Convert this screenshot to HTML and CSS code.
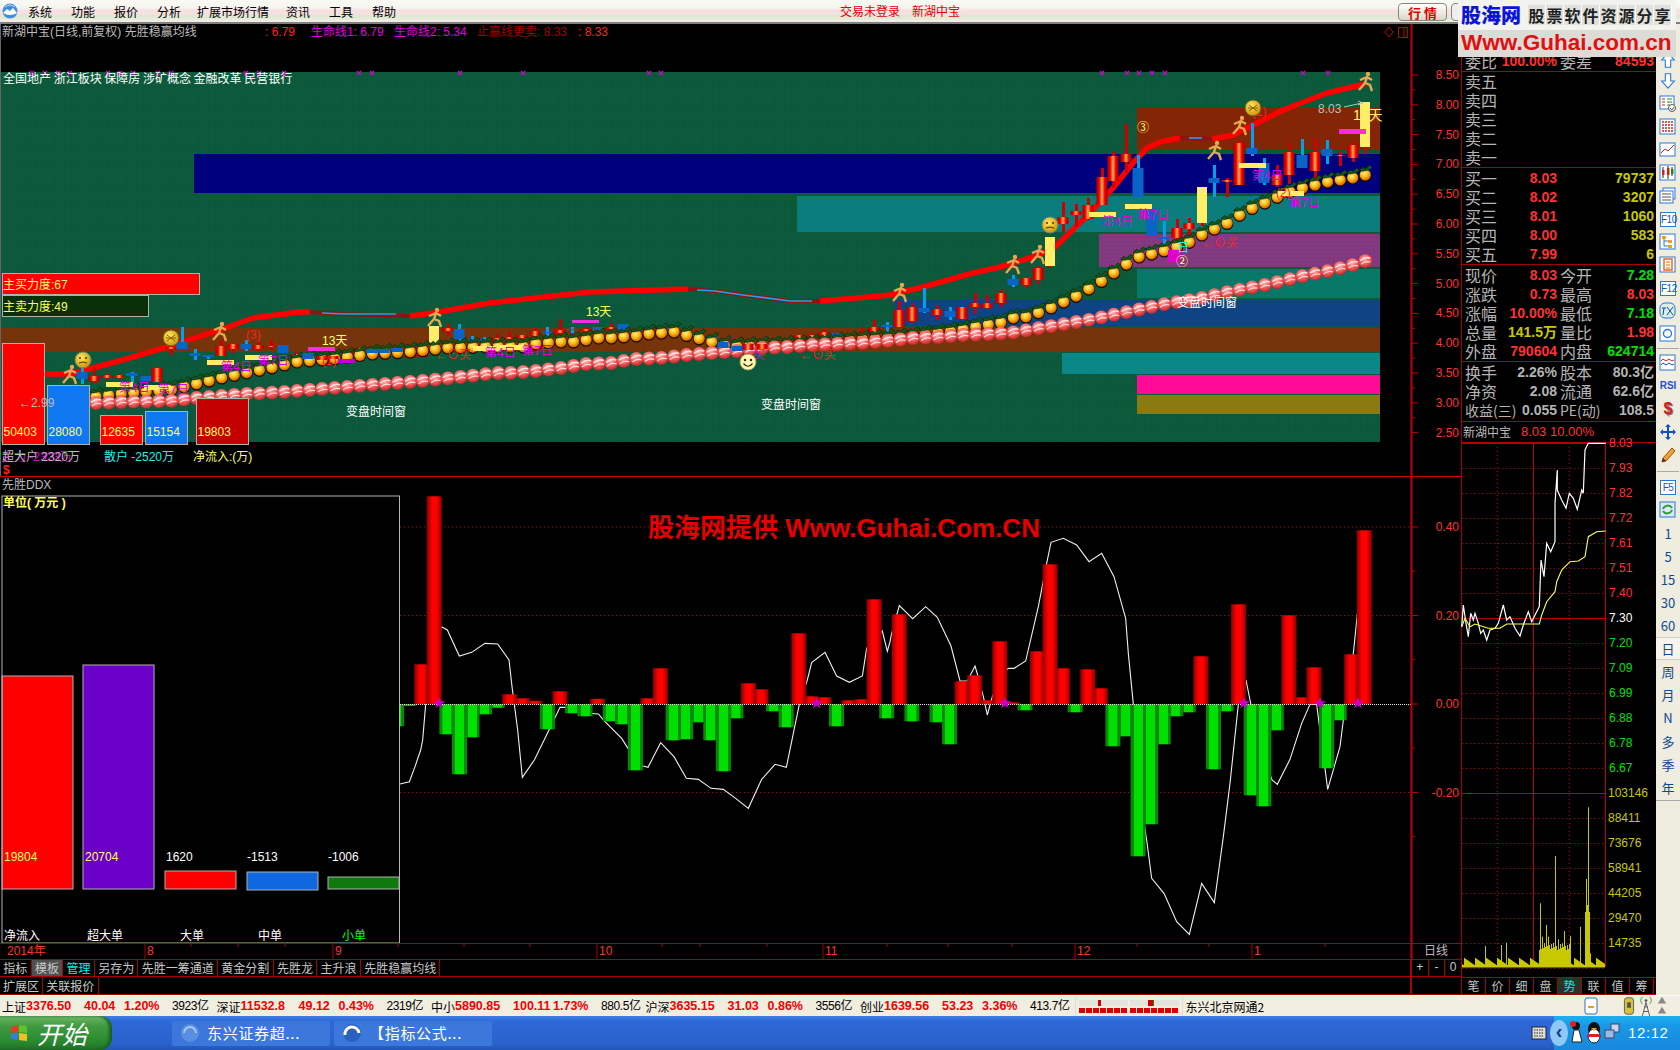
FILE: index.html
```html
<!DOCTYPE html>
<html lang="zh-CN">
<head>
<meta charset="utf-8">
<title>新湖中宝 行情</title>
<link rel="stylesheet" href="styles.css">
</head>
<body>
<div class="app">
  <header class="menubar">
    <svg class="logo" viewBox="0 0 16 16"><circle cx="8" cy="8" r="7.5" fill="#3f8fe0"/><path d="M1 10 L5 6 L8 8 L11 5 L15 10 Q8 14 1 10Z" fill="#fff"/><path d="M3 4 Q8 0 13 4" stroke="#cde" fill="none"/></svg>
    <nav class="menu"><span>系统</span><span>功能</span><span>报价</span><span>分析</span><span class="menu-wide">扩展市场行情</span><span>资讯</span><span>工具</span><span>帮助</span></nav>
    <div class="login"><span>交易未登录</span><span>新湖中宝</span></div>
    <button class="quote-btn">行&nbsp;情</button>
    <span class="quote-btn2"></span>
  </header>

  <div class="watermark">
    <div class="wm-top"><strong class="wm-name">股海网</strong><span class="wm-slogan"><i>股</i><i>票</i><i>软</i><i>件</i><i>资</i><i>源</i><i>分</i><i>享</i></span></div>
    <div class="wm-url">Www.Guhai.com.cn</div>
  </div>

  <div class="workspace">
    <main class="left">
      <svg id="chart" class="chart" viewBox="0 24 1461 935" width="1461" height="935">
        <defs>
          <pattern id="noise" width="9" height="5" patternUnits="userSpaceOnUse"><rect width="9" height="5" fill="#0c5a3b"/><rect x="1" y="1" width="1" height="1" fill="#0a5034"/><rect x="5" y="3" width="1" height="1" fill="#0e6040"/><rect x="7" y="0" width="1" height="1" fill="#0a5236"/></pattern>
          <pattern id="purpleDots" width="4" height="4" patternUnits="userSpaceOnUse"><rect width="4" height="4" fill="#843a80"/><rect x="1" y="1" width="1" height="1" fill="#723070"/></pattern>
          <linearGradient id="cRed"><stop offset="0" stop-color="#a80000"/><stop offset=".25" stop-color="#f00000"/><stop offset=".5" stop-color="#ffb050"/><stop offset=".75" stop-color="#f00000"/><stop offset="1" stop-color="#a80000"/></linearGradient>
          <linearGradient id="bRed"><stop offset="0" stop-color="#8c0000"/><stop offset=".35" stop-color="#ff0000"/><stop offset=".65" stop-color="#ff0000"/><stop offset="1" stop-color="#8c0000"/></linearGradient>
          <linearGradient id="bGreen"><stop offset="0" stop-color="#068a06"/><stop offset=".2" stop-color="#068a06"/><stop offset=".21" stop-color="#00e000"/><stop offset=".8" stop-color="#00e000"/><stop offset=".81" stop-color="#068a06"/><stop offset="1" stop-color="#068a06"/></linearGradient>
          <radialGradient id="orangeG" cx=".42" cy=".35" r=".7"><stop offset="0" stop-color="#fff08a"/><stop offset=".45" stop-color="#ffc018"/><stop offset="1" stop-color="#c85000"/></radialGradient>
          <radialGradient id="pearlG" cx=".45" cy=".35" r=".75"><stop offset="0" stop-color="#ffb4b4"/><stop offset=".6" stop-color="#e84848"/><stop offset="1" stop-color="#a81820"/></radialGradient>
          <radialGradient id="goldG" cx=".4" cy=".35" r=".7"><stop offset="0" stop-color="#ffe860"/><stop offset="1" stop-color="#c89000"/></radialGradient>
          <clipPath id="ddxClip"><rect x="400" y="470" width="1012" height="480"/></clipPath>
          <g id="orange"><circle r="6.3" cy=".3" fill="#1a0c00"/><circle r="5.6" cy="-.2" fill="url(#orangeG)"/><path d="M-6 -5 L-2 -8 L0 -6 L4 -10 L7 -8 L4 -5.5 L0 -4.5 L-3 -4Z" fill="#14581a" stroke="#08280a" stroke-width=".7"/></g>
          <g id="pearl"><circle r="6.9" fill="url(#pearlG)"/><path d="M-5 -.6 Q0 -5 5 -3" stroke="#ffe0e0" stroke-width="1.5" fill="none"/><path d="M-4.2 3 Q0 -.6 5.2 .8" stroke="#ffe0e0" stroke-width="1.2" fill="none"/></g>
          <g id="runner"><circle cx="2" cy="-8" r="2.2" fill="#e8a850"/><path d="M1 -5 L-1 1 M-6 -2 L1 -5 L6 -2 M-1 1 L-7 8 M-1 1 L4 3 L6 9" stroke="#e8a850" stroke-width="2.4" fill="none"/></g>
          <g id="smile"><circle r="8" fill="url(#goldG)" stroke="#6a8a6a"/><circle cx="-3" cy="-2" r="1" fill="#503000"/><circle cx="3" cy="-2" r="1" fill="#503000"/><path d="M-4 3 Q0 1 4 3" stroke="#503000" fill="none"/></g>
          <g id="smile2"><circle r="8" fill="url(#goldG)" stroke="#6a5a20"/><path d="M-4 -3 L4 3 M4 -3 L-4 3 M-5 0 L5 0" stroke="#8a5a00"/></g>
          <g id="smile3"><circle r="8" fill="#fff6b0" stroke="#a0a060"/><circle cx="-3" cy="-2" r="1.2" fill="#302000"/><circle cx="3" cy="-2" r="1.2" fill="#302000"/><path d="M-4.5 1.5 Q0 7 4.5 1.5" stroke="#302000" fill="none" stroke-width="1.2"/></g>
          <polygon id="star" points="0,-6 1.6,-1.8 6,-1.8 2.4,.9 3.8,5.2 0,2.6 -3.8,5.2 -2.4,.9 -6,-1.8 -1.6,-1.8" fill="#cc00cc"/>
        </defs>
        <g id="layer"></g>
      </svg>
      <div class="tabs">
        <span class="tab">指标</span><span class="tab tab-on">模板</span><span class="tab tab-cyan">管理</span><span class="tab">另存为</span><span class="tab">先胜一筹通道</span><span class="tab">黄金分割</span><span class="tab">先胜龙</span><span class="tab">主升浪</span><span class="tab">先胜稳赢均线</span>
        <div class="pm"><span>+</span><span>-</span><span>0</span></div>
      </div>
      <div class="tabs tabs-second">
        <span class="tab tab-ext">扩展区</span><span class="tab">关联报价</span>
        <div class="pm pm-empty"></div>
      </div>
    </main>

    <aside class="panel">
      <div class="panel-spacer"></div>
      <section class="qsec qsec-first">
        <div class="qrow"><span>委比</span><b class="red">100.00%</b><span class="l2">委差</span><b class="red">84593</b></div>
      </section>
      <section class="qsec">
        <div class="qrow"><span>卖五</span></div>
        <div class="qrow"><span>卖四</span></div>
        <div class="qrow"><span>卖三</span></div>
        <div class="qrow"><span>卖二</span></div>
        <div class="qrow"><span>卖一</span></div>
      </section>
      <section class="qsec qsec-pad">
        <div class="qrow"><span>买一</span><b class="red">8.03</b><span class="l2"></span><b class="yel">79737</b></div>
        <div class="qrow"><span>买二</span><b class="red">8.02</b><span class="l2"></span><b class="yel">3207</b></div>
        <div class="qrow"><span>买三</span><b class="red">8.01</b><span class="l2"></span><b class="yel">1060</b></div>
        <div class="qrow"><span>买四</span><b class="red">8.00</b><span class="l2"></span><b class="yel">583</b></div>
        <div class="qrow"><span>买五</span><b class="red">7.99</b><span class="l2"></span><b class="yel">6</b></div>
      </section>
      <section class="qsec qsec-pad">
        <div class="qrow"><span>现价</span><b class="red">8.03</b><span class="l2">今开</span><b class="grn">7.28</b></div>
        <div class="qrow"><span>涨跌</span><b class="red">0.73</b><span class="l2">最高</span><b class="red">8.03</b></div>
        <div class="qrow"><span>涨幅</span><b class="red">10.00%</b><span class="l2">最低</span><b class="grn">7.18</b></div>
        <div class="qrow"><span>总量</span><b class="yel">141.5万</b><span class="l2">量比</span><b class="red">1.98</b></div>
        <div class="qrow"><span>外盘</span><b class="red">790604</b><span class="l2">内盘</span><b class="grn">624714</b></div>
      </section>
      <section class="qsec qsec-pad qsec-padb">
        <div class="qrow"><span>换手</span><b class="gry">2.26%</b><span class="l2">股本</span><b class="gry">80.3亿</b></div>
        <div class="qrow"><span>净资</span><b class="gry">2.08</b><span class="l2">流通</span><b class="gry">62.6亿</b></div>
        <div class="qrow"><span class="nw">收益(三)</span><b class="gry">0.055</b><span class="l2 nw">PE(动)</span><b class="gry">108.5</b></div>
      </section>
      <section class="qsec mini-head"><span class="mh-name">新湖中宝</span><span class="mh-val">8.03 10.00%</span></section>
      <svg id="mini" class="mini" viewBox="1462 443 194 534" width="194" height="534"></svg>
      <div class="mini-tabs"><span>笔</span><span>价</span><span>细</span><span>盘</span><span class="mt-on">势</span><span>联</span><span>值</span><span>筹</span></div>
    </aside>

    <aside class="toolbar">
      <div class="ti ti-arrow"><svg class="ico" viewBox="0 0 18 20"><path d="M9 2 L16 10 H12 V18 H6 V10 H2Z" fill="#fff" stroke="#2a78d8" stroke-width="1.2"/></svg></div>
      <div class="ti ti-arrow"><svg class="ico" viewBox="0 0 18 20"><path d="M9 18 L16 10 H12 V2 H6 V10 H2Z" fill="#fff" stroke="#2a78d8" stroke-width="1.2"/></svg></div>
      <div class="ti"><svg class="ico" viewBox="0 0 18 18"><rect x="1" y="1" width="14" height="13" fill="#fff" stroke="#2a78d8"/><path d="M3 4h3M3 7h3M3 10h3" stroke="#d02020"/><path d="M8 4h5M8 7h5M8 10h3" stroke="#209020"/><circle cx="13" cy="13" r="3.5" fill="#fff" stroke="#555"/><path d="M11 13l2 2 2-3" stroke="#555" fill="none"/></svg></div>
      <div class="ti"><svg class="ico" viewBox="0 0 18 18"><rect x="1" y="1" width="15" height="15" fill="#fff" stroke="#2a78d8"/><path d="M3 4h11M3 7h11M3 10h11M3 13h11" stroke="#d02020" stroke-width="1.5" stroke-dasharray="2 1"/></svg></div>
      <div class="ti"><svg class="ico" viewBox="0 0 18 18"><rect x="1" y="2" width="15" height="13" fill="#fff" stroke="#2a78d8"/><path d="M2 12 L6 8 L9 10 L15 4" stroke="#d02020" fill="none"/></svg></div>
      <div class="ti"><svg class="ico" viewBox="0 0 18 18"><rect x="1" y="1" width="15" height="15" fill="#fff" stroke="#2a78d8"/><path d="M4 3v11M9 2v13M13 3v9" stroke="#222"/><rect x="3" y="6" width="2.5" height="5" fill="#d02020"/><rect x="8" y="4" width="2.5" height="7" fill="#d02020"/><rect x="12" y="5" width="2.5" height="5" fill="#109010"/></svg></div>
      <div class="ti"><svg class="ico" viewBox="0 0 18 18"><rect x="4" y="1" width="12" height="11" fill="#fff" stroke="#2a78d8"/><rect x="1" y="4" width="13" height="12" fill="#fff" stroke="#2a78d8"/><path d="M3 7h9M3 10h9M3 13h9" stroke="#555"/></svg></div>
      <div class="ti"><span class="fkey">F10</span></div>
      <div class="ti"><svg class="ico" viewBox="0 0 18 18"><rect x="1" y="1" width="15" height="15" fill="#fff" stroke="#2a78d8"/><rect x="3" y="3" width="4" height="3" fill="#f0a020"/><rect x="9" y="7" width="4" height="3" fill="#f0a020"/><rect x="9" y="12" width="4" height="3" fill="#f0a020"/><path d="M5 6v7h4M5 8h4" stroke="#2a78d8" fill="none"/></svg></div>
      <div class="ti"><svg class="ico" viewBox="0 0 18 18"><rect x="1" y="1" width="15" height="15" fill="#fff" stroke="#2a78d8"/><rect x="5" y="3" width="8" height="11" fill="#fff" stroke="#e86010" stroke-width="1.4"/><path d="M7 6h4M7 9h4M7 12h4" stroke="#e86010" stroke-width="1.2"/></svg></div>
      <div class="ti"><span class="fkey">F12</span></div>
      <div class="ti"><svg class="ico" viewBox="0 0 18 18"><rect x="1" y="1" width="15" height="15" rx="5" fill="#d8f0e8" stroke="#2a78d8"/><path d="M3 6h4M5 6L4 13M8 5l6 8M14 5l-6 8" stroke="#1a4a90" fill="none"/></svg></div>
      <div class="ti"><svg class="ico" viewBox="0 0 18 18"><rect x="1" y="1" width="15" height="15" fill="#fff" stroke="#2a78d8"/><circle cx="8.5" cy="8.5" r="4" fill="none" stroke="#2a78d8" stroke-width="1.4"/></svg></div>
      <div class="ti-sep ti-sep-a"></div>
      <div class="ti"><svg class="ico" viewBox="0 0 18 18"><rect x="1" y="1" width="15" height="15" fill="#fff" stroke="#2a78d8"/><path d="M2 7l2-2 3 2 3-2 3 2 2-1" stroke="#d02020" fill="none"/><path d="M2 11l2-2 3 2 3-2 3 2 2-1" stroke="#1a4ab0" fill="none"/></svg></div>
      <div class="ti"><span class="rsi">RSI</span></div>
      <div class="ti"><span class="dollar">$</span></div>
      <div class="ti"><svg class="ico" viewBox="0 0 18 18"><path d="M9 1l3 3H10v4h4V6l3 3-3 3v-2h-4v4h2l-3 3-3-3h2v-4H4v2L1 9l3-3v2h4V4H6Z" fill="#1050c0"/></svg></div>
      <div class="ti"><svg class="ico" viewBox="0 0 18 18"><path d="M3 16l1-4L13 2l3 3-9 10Z" fill="#f0a030" stroke="#a05010"/><path d="M3 16l1-4 3 3Z" fill="#333"/></svg></div>
      <div class="ti-sep"></div>
      <div class="ti"><span class="fkey">F5</span></div>
      <div class="ti"><svg class="ico" viewBox="0 0 18 18"><rect x="1" y="1" width="15" height="15" fill="#dce8f8" stroke="#2a78d8"/><path d="M4 8a5 5 0 0 1 9-1M13 9a5 5 0 0 1-9 1" stroke="#30a030" stroke-width="2" fill="none"/></svg></div>
      <div class="ti tn">1</div><div class="ti tn">5</div><div class="ti tn">15</div><div class="ti tn">30</div><div class="ti tn">60</div>
      <div class="ti tn tn-on">日</div><div class="ti tn">周</div><div class="ti tn">月</div><div class="ti tn">N</div><div class="ti tn">多</div><div class="ti tn">季</div><div class="ti tn">年</div>
      <div class="ti-end"></div>
    </aside>
  </div>

  <footer class="status">
    <div class="idx"><span class="n">上证</span><b class="p">3376.50</b><b class="c">40.04</b><b class="r">1.20%</b><span class="a">3923亿</span></div>
    <div class="idx"><span class="n">深证</span><b class="p">11532.8</b><b class="c">49.12</b><b class="r">0.43%</b><span class="a">2319亿</span></div>
    <div class="idx"><span class="n">中小</span><b class="p">5890.85</b><b class="c">100.11</b><b class="r">1.73%</b><span class="a">880.5亿</span></div>
    <div class="idx"><span class="n">沪深</span><b class="p">3635.15</b><b class="c">31.03</b><b class="r">0.86%</b><span class="a">3556亿</span></div>
    <div class="idx"><span class="n">创业</span><b class="p">1639.56</b><b class="c">53.23</b><b class="r">3.36%</b><span class="a">413.7亿</span></div>
    <div class="meters">
      <div class="meter"><div class="m-top"><i class="m-mark"></i></div><div class="m-bot"></div></div>
      <div class="meter"><div class="m-top"><i class="m-mark m-mark2"></i></div><div class="m-bot"></div></div>
    </div>
    <span class="server">东兴北京网通2</span>
    <div class="status-ic">
      <svg class="si" viewBox="0 0 14 18"><rect x="1" y="1" width="12" height="16" rx="2" fill="#fff" stroke="#3a6ab0"/><path d="M4 10h6" stroke="#e0a020" stroke-width="2"/></svg>
      <svg class="si si-b" viewBox="0 0 14 24"><rect x="2" y="3" width="10" height="18" rx="3" fill="#d8c040" stroke="#556"/><rect x="5" y="8" width="4" height="6" fill="#554"/></svg>
      <svg class="si si-c" viewBox="0 0 14 24"><path d="M7 8 L3 23 M7 8 L11 23 M4 18h6 M5 13h4" stroke="#555" fill="none"/><path d="M3 2a6 6 0 0 0 0 8M11 2a6 6 0 0 1 0 8" stroke="#3a9a3a" fill="none"/><circle cx="7" cy="6" r="1.5" fill="#555"/></svg>
      <svg class="si si-d" viewBox="0 0 12 24"><path d="M6 1l5 8H1ZM6 13l5 8H1Z" fill="#888"/></svg>
    </div>
  </footer>

  <footer class="taskbar">
    <div class="start"><svg class="flag" viewBox="0 0 18 18"><path d="M1 3l7-2v7l-7 1Z" fill="#e04020"/><path d="M9 1l8 1v7l-8-1Z" fill="#60c030"/><path d="M1 10l7-1v7l-7-1Z" fill="#3080e0"/><path d="M9 9l8 1v7l-8-1Z" fill="#f0c020"/></svg><span>开始</span></div>
    <div class="task"><svg class="task-ic" viewBox="0 0 20 20"><circle cx="10" cy="10" r="9" fill="#5a8ee0"/><path d="M4 10a6 6 0 0 1 12 0" stroke="#a8c8f8" stroke-width="2" fill="none"/></svg><span>东兴证券超...</span></div>
    <div class="task"><svg class="task-ic" viewBox="0 0 20 20"><circle cx="10" cy="10" r="9" fill="#2a60c0"/><path d="M3 12a7 7 0 0 1 14-2" stroke="#fff" stroke-width="3" fill="none"/></svg><span>【指标公式...</span></div>
    <div class="tray">
      <svg class="keyb" viewBox="0 0 16 16"><rect x="1" y="2" width="14" height="12" fill="#ddd" stroke="#222"/><path d="M3 5h10M3 8h10M3 11h10" stroke="#222" stroke-dasharray="1.5 1"/></svg>
      <span class="tray-chev">‹</span>
      <div class="tray-box">
        <svg class="tr" viewBox="0 0 16 24"><circle cx="8" cy="5" r="4" fill="#111"/><circle cx="5" cy="3" r="3" fill="#e02020"/><path d="M6 9h5l3 12H4Z" fill="#fff" stroke="#222"/></svg>
        <svg class="tr" viewBox="0 0 16 24"><ellipse cx="8" cy="8" rx="6" ry="7" fill="#111"/><ellipse cx="8" cy="15" rx="6" ry="7" fill="#fff" stroke="#222"/><path d="M5 7h6l-3 3Z" fill="#f0a020"/><path d="M2 13h12v3H2Z" fill="#e02020"/></svg>
        <svg class="tr" viewBox="0 0 16 24"><rect x="7" y="3" width="8" height="8" fill="#c8d8f0" stroke="#446"/><rect x="1" y="9" width="9" height="8" fill="#9ab8e8" stroke="#446"/></svg>
      </div>
      <span class="clock">12:12</span>
    </div>
  </footer>
</div>
<script src="charts.js"></script>
</body>
</html>
```
FILE: styles.css
```css
* { box-sizing: border-box; }
html, body { margin: 0; padding: 0; }
body { width: 1680px; height: 1050px; overflow: hidden; background: #000; font-family: "Noto Sans CJK SC", "Liberation Sans", sans-serif; }
.app { position: relative; width: 1680px; height: 1050px; display: flex; flex-direction: column; }

/* menu */
.menubar { height: 24px; flex: none; display: flex; align-items: center; border-bottom: 2px solid #808080; font-size: 12px; color: #000;
  background: linear-gradient(#fafaf4 0, #f6f4ee 8px, #f6e0e2 10px, #f6e0e2 14px, #dfe8d2 15px, #e4ead8 19px, #f2ece6 20px, #f2ece6 22px); }
.logo { width: 16px; height: 16px; margin-left: 2px; flex: none; }
.menu { display: flex; margin-left: 10px; gap: 19px; }
.menu-wide { margin-left: -3px; margin-right: -2px; }
.login { position: absolute; left: 840px; top: 2px; display: flex; gap: 12px; color: #e00000; line-height: 18px; }
.quote-btn { position: absolute; left: 1398px; top: 3px; width: 49px; height: 18px; padding: 0; border: 1px solid #8a8a7a; border-radius: 4px; background: linear-gradient(#fff, #d8d8c8); color: #e00000; font: bold 13px "Noto Sans CJK SC", sans-serif; line-height: 15px; }
.quote-btn2 { position: absolute; left: 1451px; top: 3px; width: 10px; height: 18px; border: 1px solid #8a8a7a; border-radius: 4px 0 0 4px; background: #eee; }

/* watermark */
.watermark { position: absolute; left: 1458px; top: 0; width: 218px; height: 57px; z-index: 5; }
.wm-top { height: 30px; display: flex; align-items: center; padding-left: 3px; background: #f2f2ee; }
.wm-name { width: 67px; color: #0a14d8; font: 900 20px/26px "Noto Sans CJK SC", sans-serif; letter-spacing: 0; }
.wm-slogan { display: flex; }
.wm-slogan i { width: 18px; height: 20px; font: bold 16px/20px "Noto Sans CJK SC", sans-serif; color: #222; text-align: center; background: #e0e0dc; border-right: 1px solid #fff; }
.wm-url { height: 27px; background: #dddbd6; color: #e01010; font: bold 22.5px/25px "Liberation Sans", sans-serif; padding-left: 3px; }

/* workspace */
.workspace { flex: none; height: 971px; display: flex; }
.left { width: 1461px; flex: none; display: flex; flex-direction: column; background: #000; }
.chart { display: block; flex: none; }
.tabs { height: 17px; flex: none; display: flex; align-items: stretch; border-top: 1px solid #a80000; color: #c8c8c8; font-size: 12px; line-height: 15px; }
.tabs-second { height: 19px; line-height: 17px; border-bottom: 1px solid #a80000; }
.tab { padding: 0 3.3px; border-right: 1px solid #a80000; }
.tab-on { background: #505050; }
.tab-cyan { color: #00f0f0; }
.tab-ext { padding: 0 3px; }
.pm { margin-left: auto; width: 51px; display: flex; border-left: 2px solid #a80000; font: 12px/15px "Liberation Sans", sans-serif; }
.pm span { flex: 1; text-align: center; border-right: 1px solid #a80000; }
.pm span:last-child { border-right: 0; }

/* quote panel */
.panel { width: 195px; flex: none; display: flex; flex-direction: column; background: #000; border-left: 1px solid #a80000; }
.panel-spacer { height: 28px; flex: none; }
.qsec { flex: none; border-bottom: 1px solid #a80000; padding-left: 3px; }
.qsec-pad { padding-top: 1px; }
.qsec-padb { padding-bottom: 1px; }
.qrow { height: 19px; display: grid; grid-template-columns: 32px 60px 34px 63px; align-items: center; color: #b4b4b4; font-size: 16px; line-height: 19px; white-space: nowrap; }
.qrow b { font: bold 14px/19px "Liberation Sans", "Noto Sans CJK SC", sans-serif; text-align: right; }
.qrow .l2 { padding-left: 3px; }
.nw { font-size: 14px; }
.red { color: #ff3232; }
.yel { color: #c8c800; }
.grn { color: #00e000; }
.gry { color: #b4b4b4; }
.mini-head { height: 21px; padding-left: 1px; display: flex; align-items: center; font-size: 12px; line-height: 20px; }
.mh-name { color: #bcbcbc; }
.mh-val { margin-left: 10px; color: #ff3232; font: 13px/20px "Liberation Sans", sans-serif; }
.mini { display: block; flex: none; overflow: visible; }
.mini-tabs { height: 18px; width: 194px; flex: none; display: grid; grid-template-columns: repeat(8, 24px); color: #c0c0c0; font-size: 12px; line-height: 16px; text-align: center; border-top: 1px solid #a80000; border-bottom: 1px solid #a80000; }
.mini-tabs span { border-right: 1px solid #a80000; }
.mini-tabs .mt-on { background: #26352a; color: #00f0f0; }

/* toolbar */
.toolbar { width: 24px; flex: none; display: flex; flex-direction: column; align-items: stretch; padding-top: 25px; background: #efece0; }
.ti { height: 23.1px; flex: none; display: flex; align-items: center; justify-content: center; }
.ti-arrow { height: 21.5px; }
.ico { width: 18px; height: 18px; display: block; }
.ti-sep { height: 0; margin: 4px 1px; border-top: 1px solid #aaa; flex: none; }
.ti-sep-a { margin: 2px 1px; }
.fkey { width: 16px; height: 15px; border: 1px solid #2a78d8; background: #fff; color: #1a58b8; font: 10px/13px "Liberation Sans", sans-serif; text-align: center; letter-spacing: -.5px; }
.rsi { color: #2a50c8; font: bold 10px/14px "Liberation Sans", sans-serif; }
.dollar { color: #d02020; font: bold 16px/18px "Liberation Sans", sans-serif; text-shadow: 1px 1px 0 #777; }
.tn { color: #104a90; font-size: 13px; }
.tn-on { background: #f8f4ec; border: 1px solid #ccc; border-width: 1px 0; color: #104a90; }
.ti-end { margin-top: 1px; border-top: 1px solid #aaa; height: 0; }

/* status */
.status { height: 21px; flex: none; display: flex; align-items: center; padding-left: 2px; background: #f1eee0; border-top: 1px solid #fff; font-size: 12px; color: #000; white-space: nowrap; }
.idx { width: 214.5px; flex: none; display: flex; align-items: center; }
.idx .n { width: 24px; }
.idx b { color: #f00000; font: bold 12.5px/18px "Liberation Sans", sans-serif; }
.idx .p { width: 46px; }
.idx .c { width: 40px; margin-left: 12px; text-align: left; }
.idx .r { width: 40px; }
.idx .a { margin-left: 8px; font: 12px/18px "Liberation Sans", "Noto Sans CJK SC", sans-serif; letter-spacing: -.4px; }
.meters { display: flex; gap: 2px; width: 108px; padding-left: 3px; height: 100%; align-items: center; border-left: 1px solid #ddd; border-right: 1px solid #ddd; }
.meter { width: 49px; }
.m-top { height: 6px; background: #e4e4dc; margin-bottom: 2px; position: relative; }
.m-mark { position: absolute; left: 19px; top: 0; width: 3px; height: 6px; background: #d00000; }
.m-mark2 { left: 18px; width: 6px; border-right: 1px solid #109010; }
.m-bot { height: 5px; background: repeating-linear-gradient(90deg, #d80000 0 6px, transparent 6px 7px); }
.server { margin-left: 3px; }
.status-ic { margin-left: auto; display: flex; align-items: center; width: 100px; }
.si { width: 14px; height: 18px; margin-left: 4px; }
.si-b { width: 14px; height: 22px; margin-left: 24px; }
.si-c { margin-left: 3px; height: 22px; }
.si-d { margin-left: 4px; width: 10px; height: 20px; }

/* taskbar */
.taskbar { height: 34px; flex: none; display: flex; align-items: center; background: linear-gradient(#3f7fe4 0, #2e68d8 5px, #2a62cc 28px, #2356b8 100%); color: #fff; }
.start { width: 112px; height: 34px; flex: none; display: flex; align-items: center; padding-left: 10px; background: linear-gradient(#6fb868 0, #3f9a40 30%, #2a8a30 75%, #1f6f25); border-radius: 0 12px 12px 0; box-shadow: inset -3px 0 3px #1a5f20; }
.flag { width: 18px; height: 18px; margin-right: 9px; }
.start span { font: italic 25px/32px "Noto Sans CJK SC", serif; color: #fff; }
.task { width: 158px; height: 25px; flex: none; margin-left: 4px; display: flex; align-items: center; padding-left: 8px; background: #3c78dc; border-radius: 2px; font-size: 15px; line-height: 24px; letter-spacing: .7px; }
.start + .task { margin-left: 60px; }
.task-ic { width: 20px; height: 20px; margin-right: 7px; flex: none; }
.tray { margin-left: auto; width: 150px; height: 34px; display: flex; align-items: center; position: relative; }
.keyb { width: 16px; height: 16px; margin-left: 1px; }
.tray-chev { width: 18px; height: 26px; margin-left: 3px; border-radius: 50%; background: #8ec8f4; color: #1a3a90; font: bold 20px/22px "Liberation Sans", sans-serif; text-align: center; }
.tray-box { display: flex; align-items: center; gap: 2px; }
.tr { width: 16px; height: 24px; }
.clock { font: 15px/20px "Liberation Sans", sans-serif; margin-left: 8px; letter-spacing: .6px; }
.tray::before { content: ""; position: absolute; left: 24px; right: 0; top: 0; bottom: 0; background: linear-gradient(#1fb0f0, #1898e6 30%, #1888dc); z-index: 0; }
.tray > * { position: relative; z-index: 1; }

/* svg text */
.chart text, .mini text { font-family: "Liberation Sans", "Noto Sans CJK SC", sans-serif; font-size: 12px; }
.tx-grey { fill: #bcbcbc; }
.tx-white { fill: #fff; }
.tx-tight { word-spacing: -.7px; }
.tx-red { fill: #ff2020; }
.tx-axis { fill: #ff3232; }
.tx-dred { fill: #a00000; }
.tx-mag { fill: #e000e0; }
.tx-yel { fill: #ffff60; }
.tx-cyan { fill: #20f0f0; }
.tx-green { fill: #00ff00; }
.tx-vol { fill: #c8c800; }
.tx-mg { fill: #00e000; }
.tx-bold { font-weight: bold; }
.tx-big { font-size: 26px !important; font-weight: bold; fill: #e60000; }
.tx-mid { font-size: 14px !important; }
```
FILE: charts.js
```js
(function () {
  var out = [];
  function rect(x, y, w, h, fill, ex) { out.push('<rect x="' + x + '" y="' + y + '" width="' + w + '" height="' + h + '" fill="' + fill + '" ' + (ex || '') + '/>'); }
  function line(x1, y1, x2, y2, c, w, ex) { out.push('<line x1="' + x1 + '" y1="' + y1 + '" x2="' + x2 + '" y2="' + y2 + '" stroke="' + c + '" stroke-width="' + (w || 1) + '" ' + (ex || '') + '/>'); }
  function poly(p, c, w, ex) { out.push('<polyline points="' + p.map(function (a) { return a.join(','); }).join(' ') + '" stroke="' + c + '" stroke-width="' + w + '" fill="none" ' + (ex || '') + '/>'); }
  function text(x, y, s, cls, anchor) { out.push('<text x="' + x + '" y="' + y + '" class="' + cls + '"' + (anchor ? ' text-anchor="' + anchor + '"' : '') + '>' + s + '</text>'); }
  function use(id, x, y) { out.push('<use href="#' + id + '" x="' + x + '" y="' + y + '"/>'); }
  var DOTS = 'stroke-dasharray="1 3"';
  var GRID = '#a80000';

  /* ---------- upper chart ---------- */
  line(.5, 24, .5, 476, '#666');
  rect(1, 72, 1379, 370, 'url(#noise)');
  rect(1137, 107, 243, 43, '#842606');
  rect(194, 154, 1186, 39, '#00007e');
  rect(797, 196, 583, 36, '#0a7c7c');
  rect(1099, 234, 281, 33, 'url(#purpleDots)');
  rect(1137, 269, 243, 29, '#067868');
  rect(895, 300, 485, 26, '#0f4484');
  rect(1, 328, 1379, 24, '#75340a');
  rect(1062, 353, 318, 21, '#0a8888');
  rect(1137, 375, 243, 19, '#ff0a96');
  rect(1137, 395, 243, 19, '#8a7a12');

  /* magenta markers along the top */
  [32, 45, 58, 70, 108, 120, 133, 158, 171, 246, 259, 284, 359, 372, 460, 523, 649, 661, 1102, 1127, 1139, 1152, 1165, 1303, 1328].forEach(function (x) {
    out.push('<path d="M' + (x - 2) + ' 71 l4 4 m0 -4 l-4 4" stroke="#d000d0" stroke-width="1.2"/>');
  });

  /* red average line */
  var L1 = [[45, 374], [70, 374], [93, 368], [133, 357], [167, 347], [220, 330], [253, 318], [300, 312], [310, 312]];
  var L2 = [[410, 316], [433, 313], [490, 303], [590, 292], [688, 289]];
  var L3 = [[820, 301], [857, 298], [890, 295], [923, 287], [973, 273], [1000, 267], [1033, 257], [1055, 247], [1090, 213], [1113, 188], [1133, 163], [1147, 148], [1160, 142], [1180, 138]];
  var L4 = [[1212, 139], [1233, 135], [1257, 123], [1283, 110], [1327, 93], [1365, 84]];
  [L1, L2, L3, L4].forEach(function (l) { poly(l, '#ff0000', 5.5, 'stroke-linejoin="round"'); });
  var D1 = [[310, 312], [340, 314], [410, 316]], D2 = [[688, 289], [715, 291], [743, 295], [790, 301], [820, 301]], D3 = [[1180, 138], [1212, 139]];
  [D1, D2, D3].forEach(function (l) { poly(l, '#8c1414', 4); });
  poly([[322, 313], [345, 314], [396, 314]], '#20a0f0', 1.6);
  poly([[697, 290], [715, 291], [743, 295], [790, 301], [812, 301]], '#20a0f0', 1.6);
  poly([[1189, 138], [1202, 138]], '#20a0f0', 1.6);

  /* candles: x, wick top, wick bottom, body top, body bottom, kind */
  var C = [
    [82,368,384,372,379,'b'],[94,367,384,376,381,'r'],[107,373,380,375,378,'r'],[119,373,379,375,378,'r'],[132,372,383,373,376,'b'],[146,376,381,376,381,'b'],[157,367,382,368,382,'r'],[171,347,355,347,349,'r'],[182,327,349,342,349,'b'],[195,349,360,353,356,'b'],[208,355,359,355,357,'b'],[221,340,356,346,356,'r'],[233,343,353,344,349,'r'],[246,340,351,344,349,'b'],[258,342,351,345,349,'r'],[271,340,350,346,347,'r'],[283,345,353,345,353,'b'],[296,352,358,354,356,'r'],[308,353,359,353,359,'b'],[322,355,363,355,363,'r'],[333,355,361,355,361,'r'],[347,352,360,352,360,'r'],[359,348,357,348,357,'r'],[372,348,357,348,357,'b'],[384,348,355,348,355,'b'],[397,347,357,347,357,'b'],[410,347,358,347,358,'r'],[422,346,357,348,357,'r'],[434,326,344,326,343,'y'],[448,324,336,328,331,'r'],[459,324,343,329,339,'b'],[472,336,346,339,341,'b'],[484,337,345,339,341,'b'],[497,334,343,338,342,'r'],
    [509,332,342,337,339,'r'],[522,335,338,335,338,'r'],[535,328,337,331,336,'r'],[547,327,336,332,333,'b'],[560,319,335,330,333,'r'],[572,327,333,329,330,'b'],[586,327,332,329,331,'r'],[598,327,330,327,330,'b'],[611,323,332,327,329,'r'],[623,324,330,324,330,'b'],[636,330,337,330,333,'b'],[648,330,339,330,338,'r'],[661,327,338,327,338,'r'],[673,326,333,327,330,'b'],[687,329,339,332,337,'b'],[698,332,339,333,336,'b'],[712,336,343,336,343,'b'],[723,340,348,342,348,'b'],[737,346,353,346,353,'b'],[748,344,353,344,353,'r'],[762,343,349,343,349,'r'],[775,341,344,341,344,'r'],[787,341,344,341,344,'r'],[799,335,343,335,343,'r'],[812,333,341,335,339,'r'],[824,330,338,332,338,'r'],[837,333,339,333,339,'b'],[849,335,338,335,338,'r'],[862,328,339,333,338,'r'],
    [874,320,335,327,334,'r'],[887,322,335,325,327,'b'],[899,301,327,310,327,'r'],[912,303,323,307,321,'r'],[924,288,313,308,312,'b'],[937,305,320,309,315,'r'],[950,307,320,311,317,'b'],[962,307,319,307,319,'r'],[975,293,313,303,307,'r'],[987,295,309,303,308,'r'],[1001,290,307,293,303,'r'],
    [1013,275,287,279,285,'b'],[1026,277,288,278,285,'r'],[1038,266,283,268,280,'r'],[1050,237,268,237,266,'y'],[1063,202,232,217,224,'r'],[1076,204,227,211,215,'r'],[1088,198,220,205,219,'r'],[1102,168,205,177,205,'r'],[1113,152,188,156,181,'r'],[1126,124,173,154,162,'r'],[1138,155,168,168,197,'b'],[1152,208,236,208,236,'b'],[1164,221,247,237,239,'b'],[1177,219,243,228,238,'r'],[1189,218,238,223,229,'r'],[1202,187,226,187,223,'y'],[1214,165,197,178,183,'b'],[1227,178,197,180,182,'r'],[1239,140,185,143,185,'r'],[1252,123,156,148,154,'b'],[1264,158,185,163,183,'b'],[1277,165,187,175,185,'r'],[1289,143,184,152,175,'r'],[1302,139,168,155,168,'b'],[1315,138,179,152,171,'r'],[1327,140,164,149,156,'b'],[1340,152,166,155,156,'r'],[1353,142,162,145,158,'r']
  ];
  function candle(c) {
    var x = c[0], k = c[5];
    if (k === 'r') { rect(x - 1, c[1], 3, c[2] - c[1], '#cc0000'); rect(x - 5.5, c[3], 11, c[4] - c[3], 'url(#cRed)'); }
    else if (k === 'b') { rect(x - 1, c[1], 3, c[2] - c[1], '#00a0f0'); rect(x - 5.5, c[3], 11, c[4] - c[3], '#0a64c8'); }
    else { rect(x - 1, c[3], 3, c[2] - c[3], '#cc0000'); rect(x - 5, c[3], 10, c[4] - c[3], '#ffee66'); }
  }
  C.forEach(candle);

  /* bead strings follow a path and sit on every bar */
  function interp(pts, x) {
    for (var i = 1; i < pts.length; i++) {
      if (x <= pts[i][0]) { var a = pts[i - 1], b = pts[i]; return a[1] + (b[1] - a[1]) * (x - a[0]) / (b[0] - a[0]); }
    }
    return pts[pts.length - 1][1];
  }
  var ORANGE = [[95,397],[120,394],[145,392],[170,390],[196,384],[221,378],[246,373],[271,368],[297,362],[333,359],[372,354],[410,352],[448,348],[485,347],[509,347],[523,347],[536,344],[547,343],[561,342],[573,342],[586,340],[598,338],[611,338],[623,337],[636,336],[649,334],[661,333],[674,332],[730,347],[800,345],[860,340],[900,338],[950,332],[962,330],[975,327],[987,325],[1000,323],[1013,318],[1026,317],[1038,313],[1051,308],[1064,302],[1077,296],[1089,289],[1102,281],[1114,273],[1127,264],[1139,257],[1152,254],[1164,251],[1177,247],[1190,242],[1202,235],[1215,229],[1228,223],[1240,215],[1253,208],[1265,203],[1278,197],[1290,192],[1303,188],[1316,185],[1328,182],[1341,180],[1353,178],[1366,175]];
  var PEARL = [[95,403],[120,402],[171,401],[196,398],[247,394],[283,392],[333,388],[383,384],[433,380],[497,373],[510,373],[536,371],[561,368],[586,364],[611,363],[636,359],[661,358],[687,355],[712,353],[737,351],[762,348],[787,347],[812,345],[838,344],[862,343],[887,341],[913,338],[938,337],[963,335],[988,334],[1010,333],[1088,320],[1127,312],[1165,304],[1202,298],[1228,292],[1265,285],[1303,276],[1328,271],[1353,265],[1366,261]];
  function bx(k) { return 434.33 + 12.567 * k; }
  var k;
  for (k = -27; k <= 74; k++) { var xo = bx(k) + 1; use('orange', +xo.toFixed(1), +interp(ORANGE, xo).toFixed(1)); }
  for (k = -27; k <= 74; k++) { var xp = bx(k) + 1; use('pearl', +xp.toFixed(1), +interp(PEARL, xp).toFixed(1)); }

  /* candle tops that show over the beads */
  [[308,353,359],[372,349,353],[384,349,353],[397,348,352],[723,342,348],[737,346,351]].forEach(function (b) { rect(b[0] - 5.5, b[1], 11, b[2] - b[1], '#0a64c8'); });
  [[748,344,350],[762,344,349],[322,356,360],[333,356,359]].forEach(function (b) { rect(b[0] - 5.5, b[1], 11, b[2] - b[1], 'url(#cRed)'); });

  /* last tall candle with 12天 beneath */
  text(1353, 120, '12天', 'tx-yel tx-mid');
  candle([1365, 102, 153, 102, 147, 'y']);

  /* marker bars */
  [[106,382],[144,385],[207,360],[245,355],[473,346],[497,345],[1089,212],[1125,204],[1239,163],[1277,191]].forEach(function (r) { rect(r[0], r[1], 27, 5, '#ffee66'); });
  [[308,347,27,4],[572,320,27,3],[1339,129,27,5]].forEach(function (r) { rect(r[0], r[1], r[2], r[3], '#f030e0'); });
  rect(338, 359, 17, 4, '#c000d0');
  rect(1168, 250, 12, 12, '#e000d0');

  /* chart annotations */
  [[119,392],[221,371],[485,357],[1102,226],[1252,180]].forEach(function (p) { text(p[0], p[1], '第4日', 'tx-mag'); });
  [[158,394],[258,365],[522,355],[1138,219],[1289,207]].forEach(function (p) { text(p[0], p[1], '第7日', 'tx-mag'); });
  [[322,345],[586,316]].forEach(function (p) { text(p[0], p[1], '13天', 'tx-yel'); });
  [[346,416],[761,409],[1177,307]].forEach(function (p) { text(p[0], p[1], '变盘时间窗', 'tx-white'); });
  [[435,359],[800,359],[1202,247]].forEach(function (p) { text(p[0], p[1], '←⊙买', 'tx-red'); });
  text(753, 359, '买', 'tx-mag');
  text(246, 339, '(3)', 'tx-red'); text(322, 365, '(1)', 'tx-red'); text(1252, 116, '(1)', 'tx-red'); text(1276, 197, '(2)', 'tx-red');
  text(1137, 132, '③', 'tx-yel'); text(1176, 266, '②', 'tx-yel');
  text(1177, 252, '日', 'tx-cyan');
  text(1318, 113, '8.03', 'tx-grey');
  poly([[1344, 107], [1362, 103]], '#c0c0c0', 1);
  out.push('<path d="M1358 101 l5 2 l-5 2" stroke="#c0c0c0" fill="none"/>');

  /* figures */
  [[1366,82],[1240,126],[1215,151],[1038,255],[1013,265],[900,293],[435,318],[220,332],[70,375]].forEach(function (p) { use('runner', p[0], p[1]); });
  use('smile', 1050, 225); use('smile2', 1253, 108); use('smile', 83, 360); use('smile2', 171, 338); use('smile3', 748, 362);

  /* boxes at the left of the upper chart */
  var GB = 'stroke="#b0b0b0"';
  rect(2.5, 273.5, 197, 21, '#ff0000', GB); text(3, 289, '主买力度:67', 'tx-yel');
  rect(2.5, 295.5, 146, 21, '#0a300a', GB); text(3, 311, '主卖力度:49', 'tx-yel');
  [[2.5,343,42,'#ff0000','50403'],[47.5,385,42,'#0f78f0','28080'],[100.5,415,42,'#ff0000','12635'],[145.5,411,42,'#0f78f0','15154'],[196.5,398,52,'#c40000','19803']].forEach(function (b) {
    rect(b[0], b[1] + .5, b[2], 444 - b[1], b[3], GB); text(b[0] + 1, 436, b[4], 'tx-yel');
  });
  text(19, 407, '←2.99', 'tx-grey');

  /* header lines */
  text(2, 36, '新湖中宝(日线,前复权) 先胜稳赢均线', 'tx-grey');
  text(265, 36, ': 6.79', 'tx-red');
  text(311, 36, '生命线1: 6.79', 'tx-mag');
  text(394, 36, '生命线2: 5.34', 'tx-mag');
  text(477, 36, '止赢线更卖: 8.33', 'tx-dred');
  text(578, 36, ': 8.33', 'tx-red');
  out.push('<path d="M1389 27 l4 5 l-4 5 l-4 -5Z" stroke="#c00000" fill="none"/>');
  rect(1398.5, 27.5, 9, 10, 'none', 'stroke="#c00000"'); line(1404, 28, 1404, 37, '#c00000');
  text(3, 83, '全国地产 浙江板块 保障房 涉矿概念 金融改革 民营银行', 'tx-white tx-tight');

  /* figures below the upper chart: the program prints these two on the same spot */
  text(2, 461, '主力 -2323万', 'tx-mag');
  text(2, 461, '超大户 2320万', 'tx-grey');
  text(104, 461, '散户 -2520万', 'tx-cyan');
  text(193, 461, '净流入:(万)', 'tx-yel');
  text(3, 474, '$', 'tx-red tx-bold');
  line(0, 476.5, 1461, 476.5, '#cc0000');
  text(2, 489, '先胜DDX', 'tx-grey');

  /* ---------- lower chart ---------- */
  [[527],[615.5],[792.5]].forEach(function (y) { line(400, y[0], 1412, y[0], '#c00000', 1, DOTS); });

  function z11(a) { return a.map(function (p) { return [390 + p[0] / 3, 490 + p[1] / 3]; }); }
  function z12(a) { return a.map(function (p) { return [890 + p[0] / 3, 520 + p[1] / 3]; }); }
  var W = z11([[30,882],[58,875],[75,830],[92,780],[98,750],[107,643],[118,480],[156,411],[172,420],[208,498],[245,487],[285,460],[323,462],[357,510],[366,590],[373,643],[383,720],[397,862],[433,810],[476,722],[510,652],[525,652],[565,668],[625,672],[645,695],[695,745],[714,775],[735,820],[759,828],[774,832],[812,758],[852,800],[889,865],[925,868],[963,895],[1000,898],[1037,925],[1075,955],[1115,868],[1155,823],[1189,832],[1210,730],[1228,643],[1252,570],[1265,518],[1305,487],[1340,558],[1378,577],[1417,558],[1430,475],[1477,423],[1492,484],[1500,455]])
    .concat(z12([[5,340],[28,257],[68,296],[107,260],[142,292],[183,378],[210,483],[232,483],[255,438],[263,465],[280,530],[292,585],[307,530],[330,470],[355,445],[372,445],[407,423],[445,260],[470,130],[483,67],[520,55],[560,75],[597,125],[635,100],[672,170],[707,295],[715,400],[730,553],[745,800],[770,960],[785,1075],[822,1120],[860,1205],[898,1243],[935,1090],[973,1148],[1000,950],[1020,790],[1045,553],[1068,480],[1100,640],[1146,780],[1162,793],[1200,718],[1235,610],[1260,553],[1280,553],[1290,632],[1305,745],[1313,808],[1350,680],[1360,600],[1365,553],[1390,400],[1403,273]]));
  poly(W, '#f0f0f0', 1.1);

  /* DDX bars: bar index from -3, signed height in pixels; the tallest sits on top */
  var H = [-22,-1.5,40,208,-30,-70,-33,-10,-3.5,10,6,3.5,-25,13,-9,-12,5.5,-17,-20,-66,6,36,-36,-35,-18,-36,-67,-14,21,15,-7,-23,71,8,7,-22,4,5,105,-14,
    90,-17,0,-18,-40,23,29,4,63,2,-6,53,140,36,-8,35,16,-42,-32,-152,-120,-40,-12,-8,48,-65,-7,100,-91,-102,-26,89,7,37,-64,-16,50,174];
  var bars = H.map(function (h, i) { return { h: h, x: 434.33 + 12.567 * (i - 3) }; }).filter(function (b) { return b.h !== 0; });
  bars.sort(function (a, b) { return Math.abs(a.h) - Math.abs(b.h); });
  out.push('<g clip-path="url(#ddxClip)">');
  bars.forEach(function (b) {
    if (b.h > 0) rect(+(b.x - 7.5).toFixed(1), 704.3 - b.h, 15, b.h, 'url(#bRed)');
    else rect(+(b.x - 7.5).toFixed(1), 704.3, 15, -b.h, 'url(#bGreen)');
  });
  out.push('</g>');
  line(400, 704.5, 1412, 704.5, '#e8e8e8', 1, 'stroke-dasharray="1 1"');
  [439.3, 816.7, 1005, 1244, 1320, 1358].forEach(function (x) { use('star', x, 703); });

  /* inflow panel */
  rect(2, 676, 71, 213, '#ff0000', GB);
  rect(83, 665, 71, 224, '#6a00c8', GB);
  rect(165, 871, 71, 18, '#ff0000', GB);
  rect(247, 872, 71, 18, '#1068e0', GB);
  rect(328, 877, 71, 12, '#0e7a0e', GB);
  rect(2, 496, 397.5, 447, 'none', 'stroke="#b4b4b4"');
  text(3, 507, '单位( 万元 )', 'tx-yel tx-bold');
  text(4, 861, '19804', 'tx-yel'); text(85, 861, '20704', 'tx-yel');
  text(166, 861, '1620', 'tx-white'); text(247, 861, '-1513', 'tx-white'); text(328, 861, '-1006', 'tx-white');
  text(4, 940, '净流入', 'tx-white'); text(87, 940, '超大单', 'tx-white'); text(180, 940, '大单', 'tx-white'); text(258, 940, '中单', 'tx-white'); text(342, 940, '小单', 'tx-green');

  text(648, 537, '股海网提供 Www.Guhai.Com.CN', 'tx-big');

  /* axis column */
  line(1411.5, 24, 1411.5, 959, '#c00000', 2);
  var i, labels = ['8.50','8.00','7.50','7.00','6.50','6.00','5.50','5.00','4.50','4.00','3.50','3.00','2.50'];
  for (i = 0; i < labels.length; i++) {
    var y = 75 + i * 29.8;
    line(1412, y, 1418, y, '#c00000'); text(1459, y + 4, labels[i], 'tx-axis', 'end');
    if (i < 12) line(1412, y + 14.9, 1415, y + 14.9, '#c00000');
  }
  [['0.40',527],['0.20',615.5],['0.00',704],['-0.20',792.5]].forEach(function (a) {
    line(1412, a[1], 1418, a[1], '#c00000'); line(1412, a[1] + 44, 1415, a[1] + 44, '#c00000'); text(1459, a[1] + 4, a[0], 'tx-axis', 'end');
  });

  /* time axis */
  line(0, 943.5, 1461, 943.5, GRID);
  text(7, 955, '2014年', 'tx-axis');
  [[145,'8'],[333,'9'],[597,'10'],[823,'11'],[1075,'12'],[1252,'1']].forEach(function (m) { line(m[0], 944, m[0], 959, GRID); text(m[0] + 2, 955, m[1], 'tx-axis'); });
  [191,238,285,398,464,530,662,700,767,887,948,1012,1137,1209,1325].forEach(function (x) { line(x, 944, x, 947, GRID); });
  text(1424, 955, '日线', 'tx-grey');

  document.getElementById('layer').innerHTML = out.join('');

  /* ---------- intraday chart ---------- */
  out = [];
  var ZX = function (v) { return 1440 + v / 3; }, ZY = function (v) { return 420 + v / 3; };
  var R = 1605.5;
  for (i = 0; i <= 21; i++) {
    var gy = 443 + i * 25;
    if (i === 0 || i === 7 || i === 14) line(1462, gy + .5, R, gy + .5, '#c00000');
    else line(1462, gy + .5, R, gy + .5, '#c00000', 1, DOTS);
  }
  line(1497.5, 443, 1497.5, 967, '#c00000', 1, DOTS);
  line(1569.5, 443, 1569.5, 967, '#c00000', 1, DOTS);
  line(1533.5, 443, 1533.5, 967, '#c00000');
  line(R, 443, R, 967, '#c00000');

  var P = [[65,620],[70,555],[78,610],[85,650],[92,580],[100,600],[105,580],[115,610],[122,640],[130,630],[140,660],[150,630],[165,625],[175,610],[190,555],[200,600],[210,590],[225,625],[240,648],[250,615],[265,575],[275,605],[290,575],[298,560],[303,420],[312,470],[320,370],[332,395],[345,365],[345,250],[352,150],[352,210],[365,240],[378,265],[388,220],[400,235],[412,268],[425,210],[430,220],[435,90],[445,70],[497,70]];
  var A = [[65,620],[75,595],[90,620],[105,612],[145,625],[180,625],[200,612],[298,612],[305,585],[320,545],[345,515],[350,485],[365,450],[390,425],[415,423],[435,410],[445,350],[470,335],[497,333]];
  function map(a) { return a.map(function (p) { return [+ZX(p[0]).toFixed(1), +ZY(p[1]).toFixed(1)]; }); }
  poly(map(P), '#ffffff', 1.2);
  poly(map(A), '#ffff50', 1.1);

  var prices = [['8.03','tx-axis'],['7.93','tx-axis'],['7.82','tx-axis'],['7.72','tx-axis'],['7.61','tx-axis'],['7.51','tx-axis'],['7.40','tx-axis'],['7.30','tx-white'],['7.20','tx-mg'],['7.09','tx-mg'],['6.99','tx-mg'],['6.88','tx-mg'],['6.78','tx-mg'],['6.67','tx-mg']];
  prices.forEach(function (p, n) { text(1609, 447 + n * 25, p[0], p[1]); });
  ['103146','88411','73676','58941','44205','29470','14735'].forEach(function (v, n) { text(1608, 797 + n * 25, v, 'tx-vol'); });

  /* volume columns */
  var peaks = { 135:648,183:645,198:638,300:520,305:620,318:585,325:620,345:378,355:628,365:640,373:603,390:618,420:590,437:447,440:525,445:232,450:670 };
  var pk = {};
  Object.keys(peaks).forEach(function (z) { pk[Math.round(1440 + z / 3)] = 730 + peaks[z] / 3; });
  for (var c = 1462; c < 1605; c++) {
    var zc = (c - 1440) * 3, top = 965 - ((c * 7919) % 11) * .7;
    if (zc >= 297 && zc <= 390) top = 950 - ((c * 131) % 9);
    if (zc >= 435 && zc <= 448) top = 912;
    if (pk[c]) top = pk[c];
    rect(c, +top.toFixed(1), 1, +(967.5 - top).toFixed(1), '#c8c800');
  }
  document.getElementById('mini').innerHTML = out.join('');
})();
```
